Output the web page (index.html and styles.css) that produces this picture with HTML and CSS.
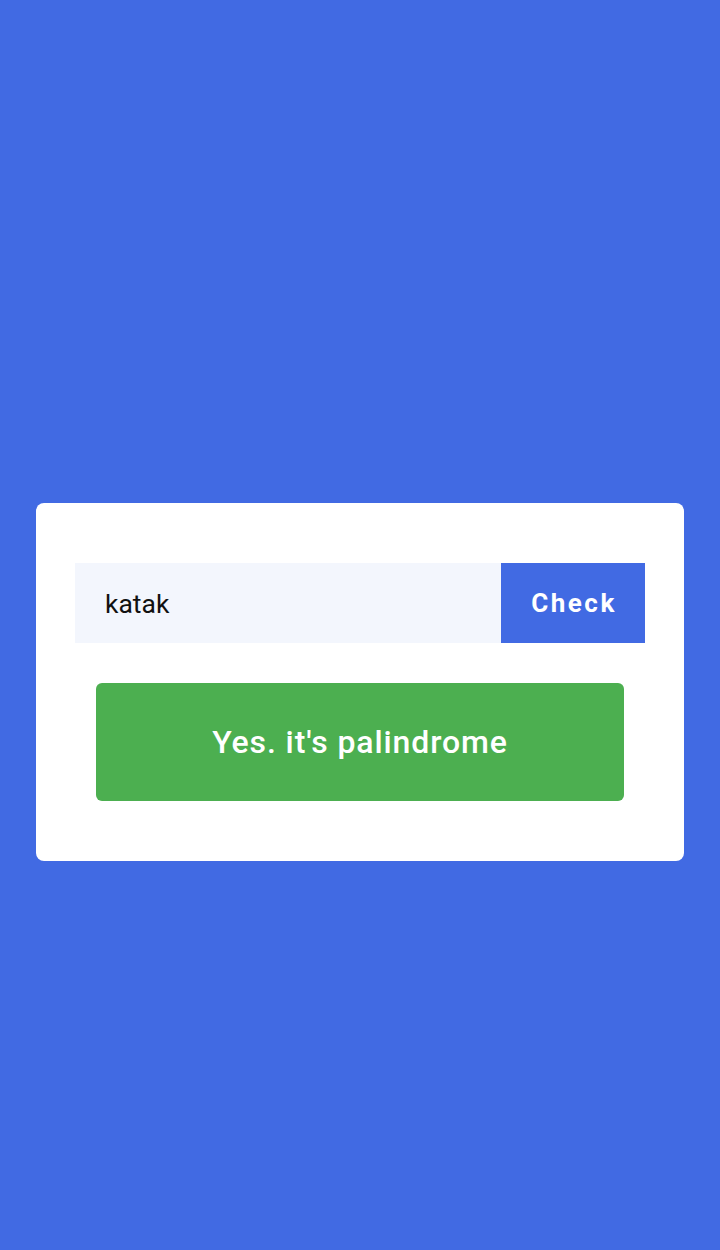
FILE: index.html
```html
<!DOCTYPE html>
<html>
<head>
<meta charset="utf-8">
<link rel="stylesheet" href="styles.css">
</head>
<body>
<main class="page">
  <section class="card">
    <div class="row">
      <div class="field">katak</div>
      <button class="check">Check</button>
    </div>
    <div class="result">Yes. it's palindrome</div>
  </section>
</main>
</body>
</html>
```
FILE: styles.css
```css
html, body {
  margin: 0;
  padding: 0;
  background: #416ae3;
  font-family: Roboto, "Noto Sans", sans-serif;
}
.page {
  width: 720px;
  height: 1250px;
  box-sizing: border-box;
  padding: 503px 36px 0;
}
.card {
  background: #ffffff;
  border-radius: 8px;
  padding: 60px 39px;
  display: flex;
  flex-direction: column;
  gap: 40px;
}
.row {
  display: flex;
  height: 80px;
}
.field {
  flex: 1;
  background: #f3f6fd;
  display: flex;
  align-items: center;
  padding-left: 30px;
  font-size: 26.5px;
  color: #111111;
}
.check {
  width: 144px;
  border: none;
  background: #416ae3;
  color: #ffffff;
  font-family: Roboto, sans-serif;
  font-weight: 700;
  font-size: 26px;
  letter-spacing: 2.5px;
  padding: 0 0 0 2px;
}
.result {
  margin: 0 21px;
  height: 118px;
  background: #4caf50;
  border-radius: 6px;
  color: #ffffff;
  font-size: 32px;
  font-weight: 500;
  letter-spacing: 0.9px;
  display: flex;
  align-items: center;
  justify-content: center;
}
```
